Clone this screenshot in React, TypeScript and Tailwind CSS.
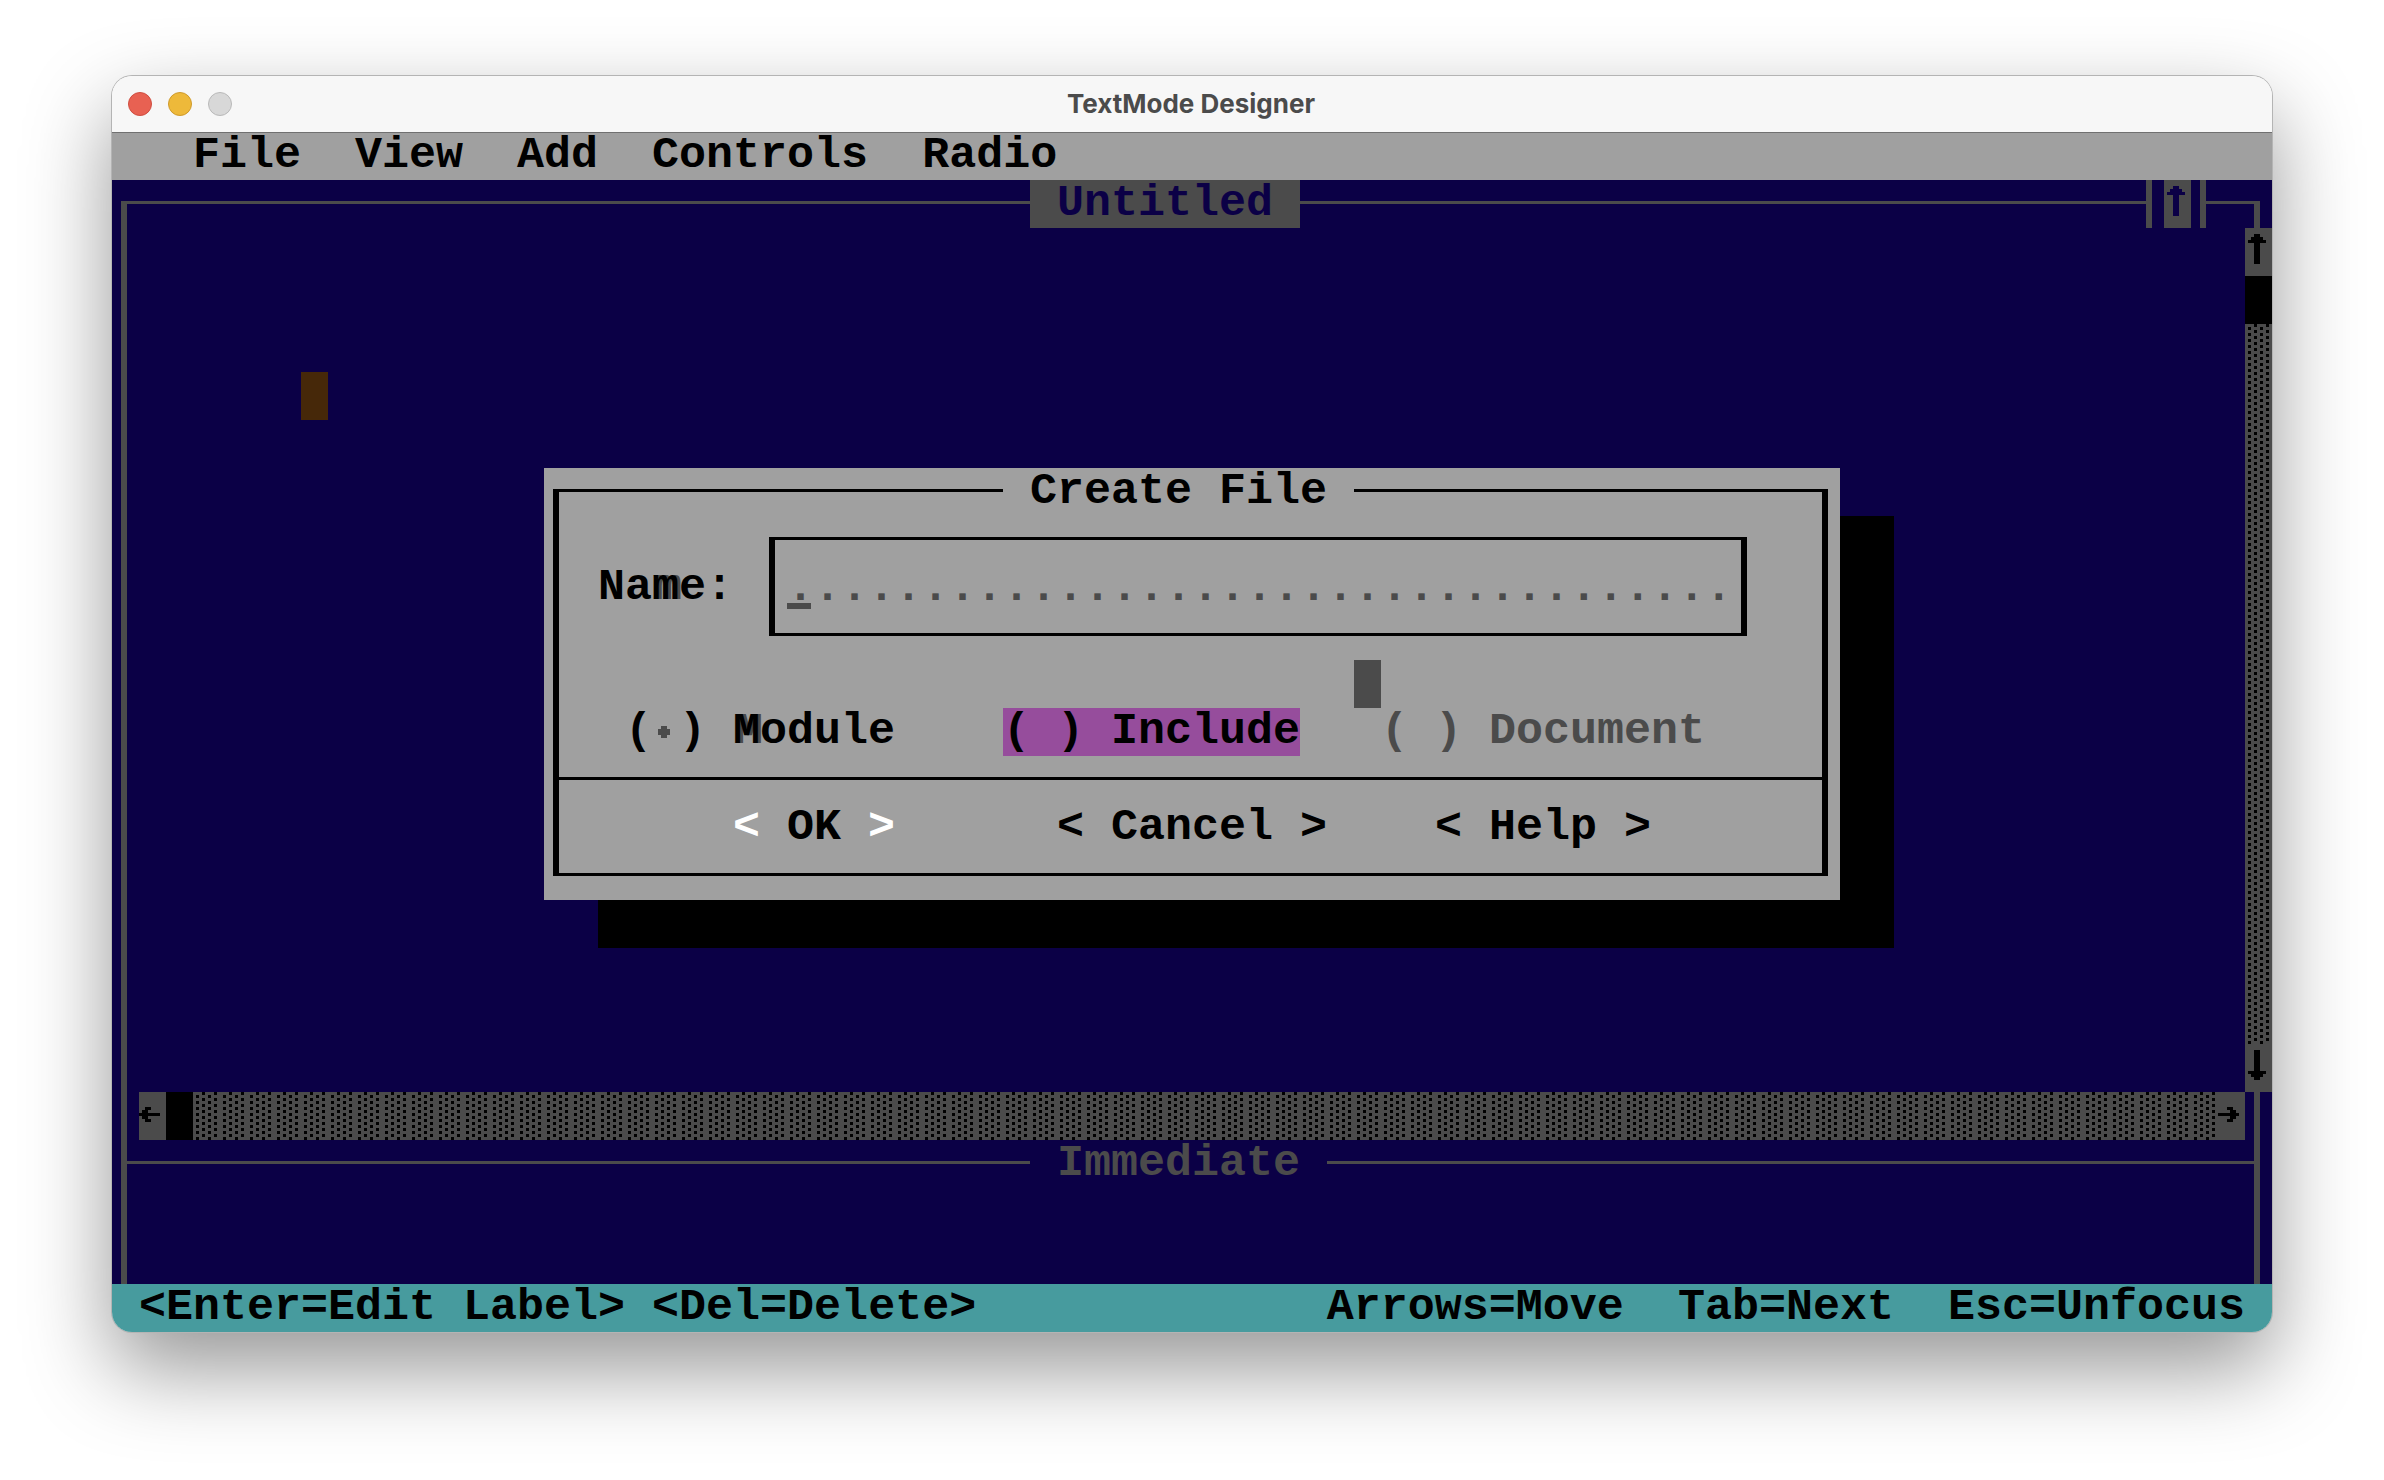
import type { ReactNode } from "react";

const menus = ["File", "View", "Add", "Controls", "Radio"];

const arrows = {
  up: "M3 2h2v10h-2z M2 3h4v1h-4z M1 4h6v1h-6z",
  down: "M3 2h2v10h-2z M1 9h6v1h-6z M2 10h4v1h-4z",
  left: "M0 7h7v1h-7z M2 5h2v1h-2z M1 6h2v3h-2z M2 9h2v1h-2z",
  right: "M0 7h7v1h-7z M3 5h2v1h-2z M4 6h2v3h-2z M3 9h2v1h-2z",
};

const ArrowCell = ({
  direction,
  label,
}: {
  direction: keyof typeof arrows;
  label: string;
}) => (
  <button
    type="button"
    aria-label={label}
    className="block h-12 w-[27px] shrink-0 bg-[#4b4b4b]"
  >
    <svg
      viewBox="0 0 9 16"
      className="h-12 w-[27px] fill-current"
      shapeRendering="crispEdges"
    >
      <path d={arrows[direction]} />
    </svg>
  </button>
);

const Track = ({ id }: { id: string }) => (
  <svg className="block h-full w-full" shapeRendering="crispEdges">
    <pattern id={id} width="27" height="6" patternUnits="userSpaceOnUse">
      <path
        d="M9 0h3v3h-3z M21 0h3v3h-3z M3 3h3v3h-3z M15 3h3v3h-3z"
        fill="#000"
      />
    </pattern>
    <rect width="100%" height="100%" fill="#4b4b4b" />
    <rect width="100%" height="100%" fill={`url(#${id})`} />
  </svg>
);

// horizontal rule that runs through the middle of a text row
const Rule = ({ className }: { className: string }) => (
  <div className={`mt-[21px] h-[3px] bg-current ${className}`} />
);

const TopLeftEdge = () => (
  <div className="flex-1">
    <div className="mt-[21px] ml-[9px] h-[27px] border-t-[3px] border-l-[6px]" />
  </div>
);

const TopRightCorner = () => (
  <div className="mt-[21px] mr-3 w-[15px] border-t-[3px] border-r-[6px]" />
);

const Radio = ({
  label,
  children,
  className = "",
  checked = false,
  disabled = false,
}: {
  label: string;
  children?: ReactNode;
  className?: string;
  checked?: boolean;
  disabled?: boolean;
}) => (
  <label className={`flex justify-self-start ${className}`}>
    <span>(</span>
    <span className="relative h-12 w-[27px]">
      <input
        type="radio"
        name="kind"
        aria-label={label}
        defaultChecked={checked}
        disabled={disabled}
        className="peer block h-12 w-[27px] appearance-none outline-none"
      />
      <svg
        viewBox="0 0 9 16"
        className="pointer-events-none absolute inset-0 hidden h-12 w-[27px] fill-[#4b4b4b] peer-checked:block"
        shapeRendering="crispEdges"
      >
        <path d="M3 6h2v4h-2z M2 7h4v2h-4z" />
      </svg>
    </span>
    <span className="mr-[27px]">)</span>
    <span>{children ?? label}</span>
  </label>
);

const CreateFileDialog = () => (
  <form
    role="dialog"
    aria-label="Create File"
    className="absolute top-72 left-1/2 w-[1296px] -translate-x-1/2 bg-[#a0a0a0] text-black shadow-[54px_48px_0_#000]"
  >
    <div className="flex h-12">
      <TopLeftEdge />
      <h2 className="px-[27px]">Create File</h2>
      <Rule className="flex-1" />
      <TopRightCorner />
    </div>

    <div className="mr-3 mb-6 ml-[9px] border-x-[6px] border-b-[3px]">
      <div className="flex pl-[39px]">
        <label htmlFor="name" className="mt-12 w-[171px]">
          Na
          <span className="[text-shadow:3px_0_0_#4b4b4b]">m</span>
          e:
        </label>
        <div className="relative mt-[21px]">
          <input
            id="name"
            type="text"
            placeholder={".".repeat(35)}
            className="block h-[99px] w-[978px] border-x-[6px] border-y-[3px] border-black pt-[3px] pl-3 outline-none placeholder:text-[#4b4b4b] placeholder:opacity-100"
          />
          <span className="absolute bottom-[27px] left-[18px] h-[6px] w-6 bg-[#4b4b4b]" />
        </div>
      </div>

      <div className="mt-[72px] grid grid-cols-3 pr-[63px] pl-[66px]">
        <Radio label="Module" checked>
          <span className="[text-shadow:3px_0_0_#4b4b4b]">M</span>odule
        </Radio>
        <Radio label="Include" className="bg-[#964d9c]" />
        <Radio label="Document" disabled className="text-[#4b4b4b]" />
      </div>

      <div className="mt-[21px] flex gap-[108px] border-t-[3px] pt-6 pb-[21px] pl-[174px]">
        <button type="button" className="mr-[54px] flex gap-[27px]">
          <span className="text-white">&lt;</span>
          OK
          <span className="text-white">&gt;</span>
        </button>
        <button type="button">&lt; Cancel &gt;</button>
        <button type="button">&lt; Help &gt;</button>
      </div>
    </div>

    {/* mouse pointer */}
    <div className="absolute top-[192px] left-[810px] h-12 w-[27px] bg-[#4b4b4b]" />
  </form>
);

const Editor = () => (
  <main className="relative bg-[#0b0046] text-[#4b4b4b]">
    <div className="flex h-12">
      <TopLeftEdge />
      <h2 className="bg-[#4b4b4b] px-[27px] text-[#0b0046]">Untitled</h2>
      <div className="flex flex-1">
        <Rule className="flex-1" />
        <Rule className="w-[9px]" />
        <div className="mr-3 w-[6px] bg-current" />
        <span className="text-[#0b0046]">
          <ArrowCell direction="up" label="Maximize" />
        </span>
        <div className="ml-[9px] w-[6px] bg-current" />
        <Rule className="w-3" />
      </div>
      <Rule className="w-[27px]" />
      <TopRightCorner />
    </div>

    <div className="flex">
      <div className="relative ml-[9px] h-[864px] flex-1 border-l-[6px]">
        <div className="absolute top-36 left-[174px] h-12 w-[27px] bg-[#462809]" />
      </div>
      <div className="flex w-[27px] flex-col text-black">
        <ArrowCell direction="up" label="Scroll up" />
        <div className="h-12 bg-black" />
        <div className="min-h-0 flex-1">
          <Track id="track-y" />
        </div>
        <ArrowCell direction="down" label="Scroll down" />
      </div>
    </div>

    <div className="mr-3 ml-[9px] border-x-[6px]">
      <div className="flex h-12 pr-[9px] pl-3 text-black">
        <ArrowCell direction="left" label="Scroll left" />
        <div className="w-[27px] bg-black" />
        <div className="min-w-0 flex-1">
          <Track id="track-x" />
        </div>
        <ArrowCell direction="right" label="Scroll right" />
      </div>
      <div className="flex h-36">
        <Rule className="flex-1" />
        <h2 className="px-[27px]">Immediate</h2>
        <Rule className="flex-1" />
        <Rule className="w-6" />
      </div>
    </div>

    <CreateFileDialog />
  </main>
);

const App = () => {
  return (
    <div className="min-h-screen bg-white px-28 pt-[76px] pb-[148px]">
      <div className="rounded-[20px] shadow-[0_0_0_1px_#b4b4b4,0_36px_86px_rgba(0,0,0,0.42)]">
        <div className="overflow-hidden rounded-[20px]">
          <header className="grid h-14 grid-cols-[1fr_auto_1fr] items-center bg-[#f7f7f7] px-4">
            <div className="flex gap-4">
              <button
                type="button"
                aria-label="Close"
                className="size-6 rounded-full border border-[#cf4e41] bg-[#e86152]"
              />
              <button
                type="button"
                aria-label="Minimize"
                className="size-6 rounded-full border border-[#cf9a2c] bg-[#eeb93a]"
              />
              <button
                type="button"
                aria-label="Zoom"
                className="size-6 rounded-full border border-[#b9b9b9] bg-[#d8d8d8]"
              />
            </div>
            <h1 className="pr-0.5 pb-0.5 font-[Inter,sans-serif] text-[26px] font-bold text-[#4b4b4b]">
              TextMode Designer
            </h1>
          </header>

          <div className="font-['Liberation_Mono',monospace] text-[45px] leading-[48px] font-bold whitespace-nowrap">
            <nav className="flex h-12 gap-[54px] bg-[#a0a0a0] pl-[81px] text-black shadow-[inset_0_1px_0_#707070]">
              {menus.map((menu) => (
                <button key={menu} type="button">
                  {menu}
                </button>
              ))}
            </nav>

            <Editor />

            <footer className="flex h-12 bg-[#479b9e] px-[27px] text-black">
              <span className="mr-[27px]">&lt;Enter=Edit Label&gt;</span>
              <span>&lt;Del=Delete&gt;</span>
              <div className="ml-auto flex gap-[54px]">
                <span>Arrows=Move</span>
                <span>Tab=Next</span>
                <span>Esc=Unfocus</span>
              </div>
            </footer>
          </div>
        </div>
      </div>
    </div>
  );
};

export default App;
